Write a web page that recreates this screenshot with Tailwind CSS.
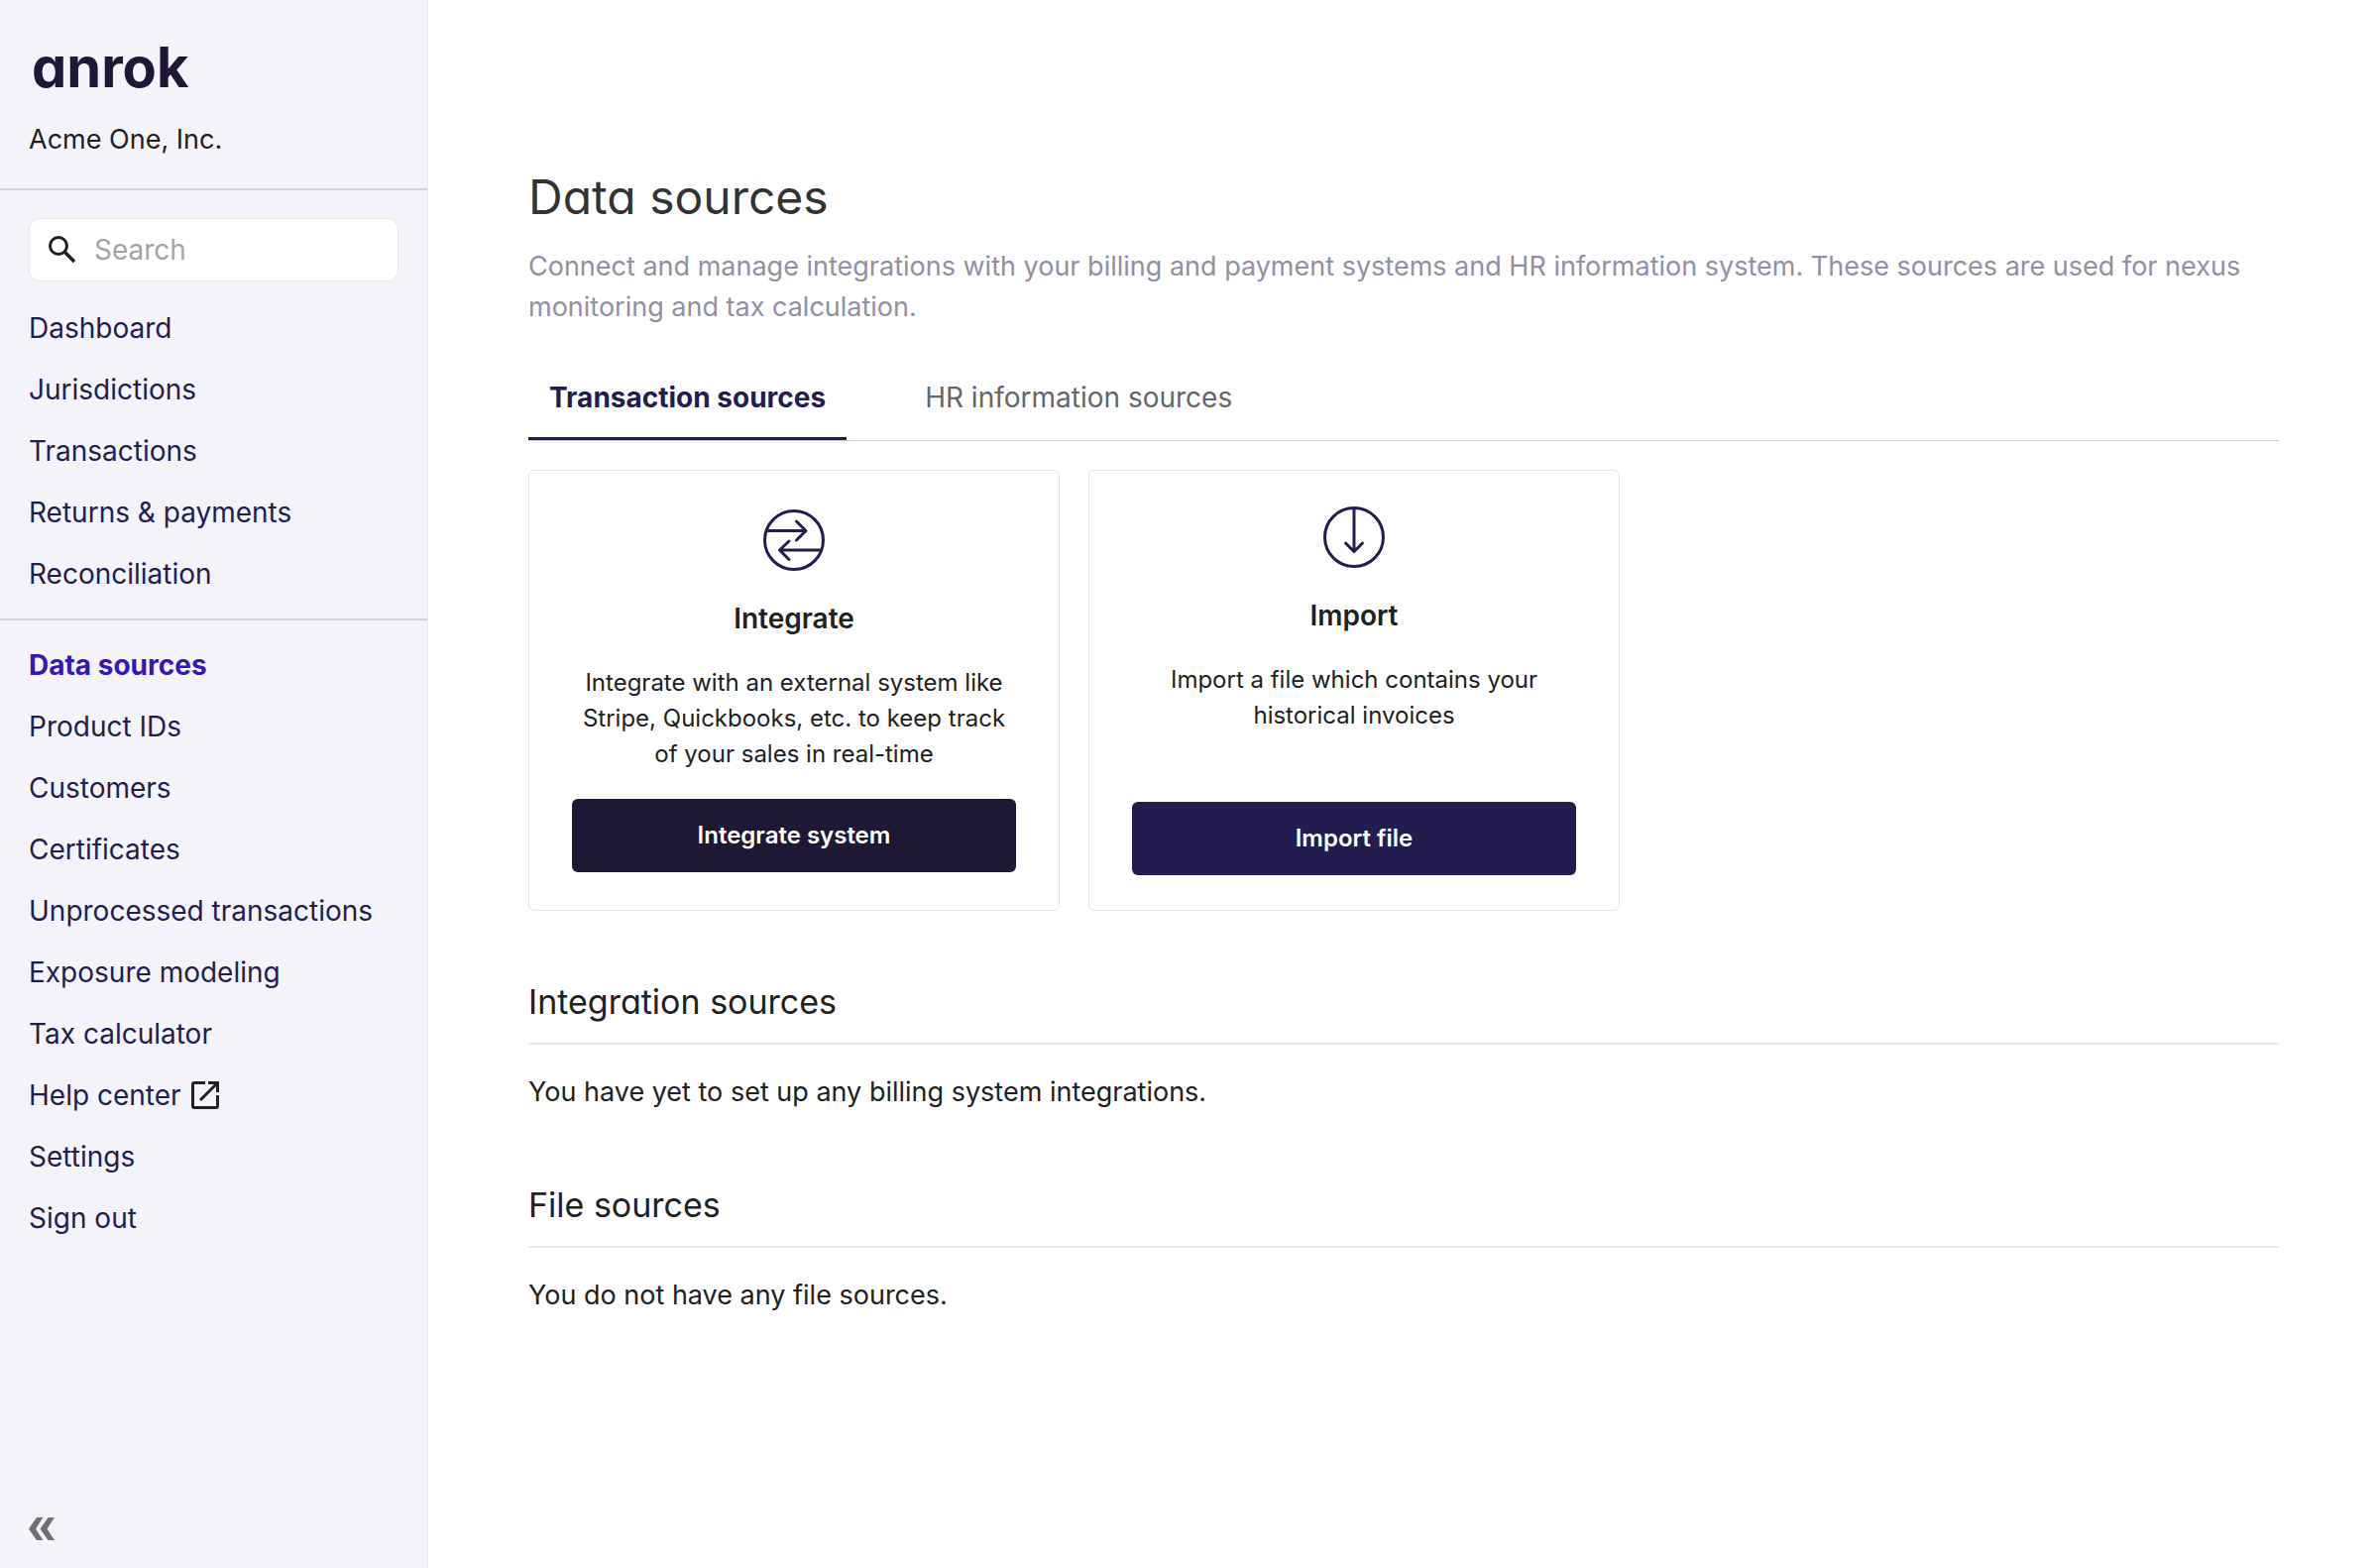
<!DOCTYPE html>
<html lang="en">
<head>
<meta charset="utf-8">
<meta name="viewport" content="width=device-width, initial-scale=1">
<title>Data sources – Anrok</title>
<script src="https://cdn.jsdelivr.net/npm/@tailwindcss/browser@4"></script>
</head>
<body class="flex min-h-screen bg-white font-['Inter','Liberation_Sans',sans-serif] text-[28px] leading-[42px] text-[#212121]">

<aside class="flex w-[432px] shrink-0 flex-col border-r border-[#e8e7ee] bg-[#f4f3f9]">
  <header class="border-b-2 border-[#d5d4dc] px-[29px] pt-9 pb-7">
    <div class="pl-[3px] text-[56px] leading-[64px] font-bold text-[#1f1735] [font-feature-settings:'cv11']">anrok</div>
    <p class="mt-5 text-[27px]">Acme One, Inc.</p>
  </header>

  <label class="mx-[29px] mt-7 mb-4 flex h-16 items-center gap-4 rounded-xl border border-[#e8e7ee] bg-white px-[17px]">
    <svg class="size-8 shrink-0" viewBox="0 0 32 32" fill="none" stroke="#212121" stroke-width="3" aria-hidden="true"><circle cx="12" cy="12" r="8.5"/><path d="M18.500 18.500 28 28" stroke-width="3.600"/></svg>
    <input type="search" aria-label="Search" placeholder="Search" class="w-full min-w-0 bg-transparent outline-none placeholder:text-[#a3a3a3]">
  </label>

  <nav class="flex flex-col leading-[62px] text-[#231d4f]" aria-label="Main">
    <div class="flex flex-col border-b-2 border-[#d5d4dc] px-[29px] pb-3.5">
      <a href="#">Dashboard</a>
      <a href="#">Jurisdictions</a>
      <a href="#">Transactions</a>
      <a href="#">Returns &amp; payments</a>
      <a href="#">Reconciliation</a>
    </div>
    <div class="flex flex-col px-[29px] pt-3.5">
      <a href="#" class="font-bold text-[#3417b5]" aria-current="page">Data sources</a>
      <a href="#">Product IDs</a>
      <a href="#">Customers</a>
      <a href="#">Certificates</a>
      <a href="#">Unprocessed transactions</a>
      <a href="#">Exposure modeling</a>
      <a href="#">Tax calculator</a>
      <a href="#" class="flex items-center gap-2">Help center
        <svg class="size-8" viewBox="0 0 32 32" fill="none" stroke="#212121" stroke-width="3" aria-hidden="true"><path d="M16 3.500H5a1.500 1.500 0 0 0-1.500 1.500v22A1.500 1.500 0 0 0 5 28.500h22a1.500 1.500 0 0 0 1.500-1.500V16"/><path d="M19 3.500h9.500V13M28 4 11 21"/></svg>
      </a>
      <a href="#">Settings</a>
      <a href="#">Sign out</a>
    </div>
  </nav>

  <button type="button" class="mt-auto mb-7 ml-[29px] self-start" aria-label="Collapse sidebar">
    <svg class="h-[23px] w-[27px]" viewBox="0 0 27 23" fill="#6f6f74" aria-hidden="true"><path d="M8 0h6.500L7 11.500 14.500 23H8L0 11.500zM19.500 0H26l-7.500 11.500L26 23h-6.500l-8-11.500z"/></svg>
  </button>
</aside>

<main class="min-w-0 flex-1 px-[101px] pt-[168px]">
  <h1 class="text-[48px] leading-[62px] text-[#333] [font-feature-settings:'cv11']">Data sources</h1>
  <p class="mt-[18px] text-[27px] leading-[41px] text-[#9190a0]">Connect and manage integrations with your billing and payment systems and HR information system. These sources are used for nexus monitoring and tax calculation.</p>

  <div class="mt-[34px] flex gap-[58px] border-b border-[#cfced6]" role="tablist">
    <button type="button" role="tab" aria-selected="true" class="border-b-[3px] border-[#231d4f] px-[21px] pt-4 pb-[19px] font-bold text-[#231d4f]">Transaction sources</button>
    <button type="button" role="tab" aria-selected="false" class="border-b-[3px] border-transparent px-[21px] pt-4 pb-[19px] text-[#666]">HR information sources</button>
  </div>

  <div class="mt-[29px] flex gap-[29px]">
    <section class="flex min-h-[445px] w-[536px] flex-col items-center rounded-md border border-[#e2e1e4] px-[43px] py-[38px] text-center">
      <svg class="size-16" viewBox="0 0 64 64" fill="none" stroke="#231d4f" stroke-width="3" stroke-linecap="round" stroke-linejoin="round" aria-hidden="true"><circle cx="32" cy="32" r="29.500"/><path d="M5 22.500h38.500M34.500 13l9.500 9.500-9.500 9.500M59 42H18.500M27 33l-9.500 9 9.500 9.500"/></svg>
      <h2 class="mt-[26px] font-semibold">Integrate</h2>
      <p class="mt-[26px] text-[24px] leading-[36px]">Integrate with an external system like Stripe, Quickbooks, etc. to keep track of your sales in real-time</p>
      <button type="button" class="mt-auto h-[74px] w-full rounded-md bg-[#1e1834] text-[24px] font-semibold text-white">Integrate system</button>
    </section>
    <section class="flex min-h-[445px] w-[536px] flex-col items-center rounded-md border border-[#e2e1e4] px-[43px] py-[35px] text-center">
      <svg class="size-16" viewBox="0 0 64 64" fill="none" stroke="#231d4f" stroke-width="3" stroke-linecap="round" stroke-linejoin="round" aria-hidden="true"><circle cx="32" cy="32" r="29.500"/><path d="M32 3v43M23.500 38l8.500 8.500 8.500-8.500"/></svg>
      <h2 class="mt-[26px] font-semibold">Import</h2>
      <p class="mt-[26px] px-6 text-[24px] leading-[36px]">Import a file which contains your historical invoices</p>
      <button type="button" class="mt-auto h-[74px] w-full rounded-md bg-[#231d4f] text-[24px] font-semibold text-white">Import file</button>
    </section>
  </div>

  <section class="mt-[69px]">
    <h2 class="border-b-2 border-[#e8e7ee] pb-[18px] text-[34px] leading-[46px] [font-feature-settings:'cv11']">Integration sources</h2>
    <p class="mt-[27px] text-[27px]">You have yet to set up any billing system integrations.</p>
  </section>
  <section class="mt-[70px]">
    <h2 class="border-b-2 border-[#e8e7ee] pb-[18px] text-[34px] leading-[46px] [font-feature-settings:'cv11']">File sources</h2>
    <p class="mt-[27px] text-[27px]">You do not have any file sources.</p>
  </section>
</main>
</body>
</html>
